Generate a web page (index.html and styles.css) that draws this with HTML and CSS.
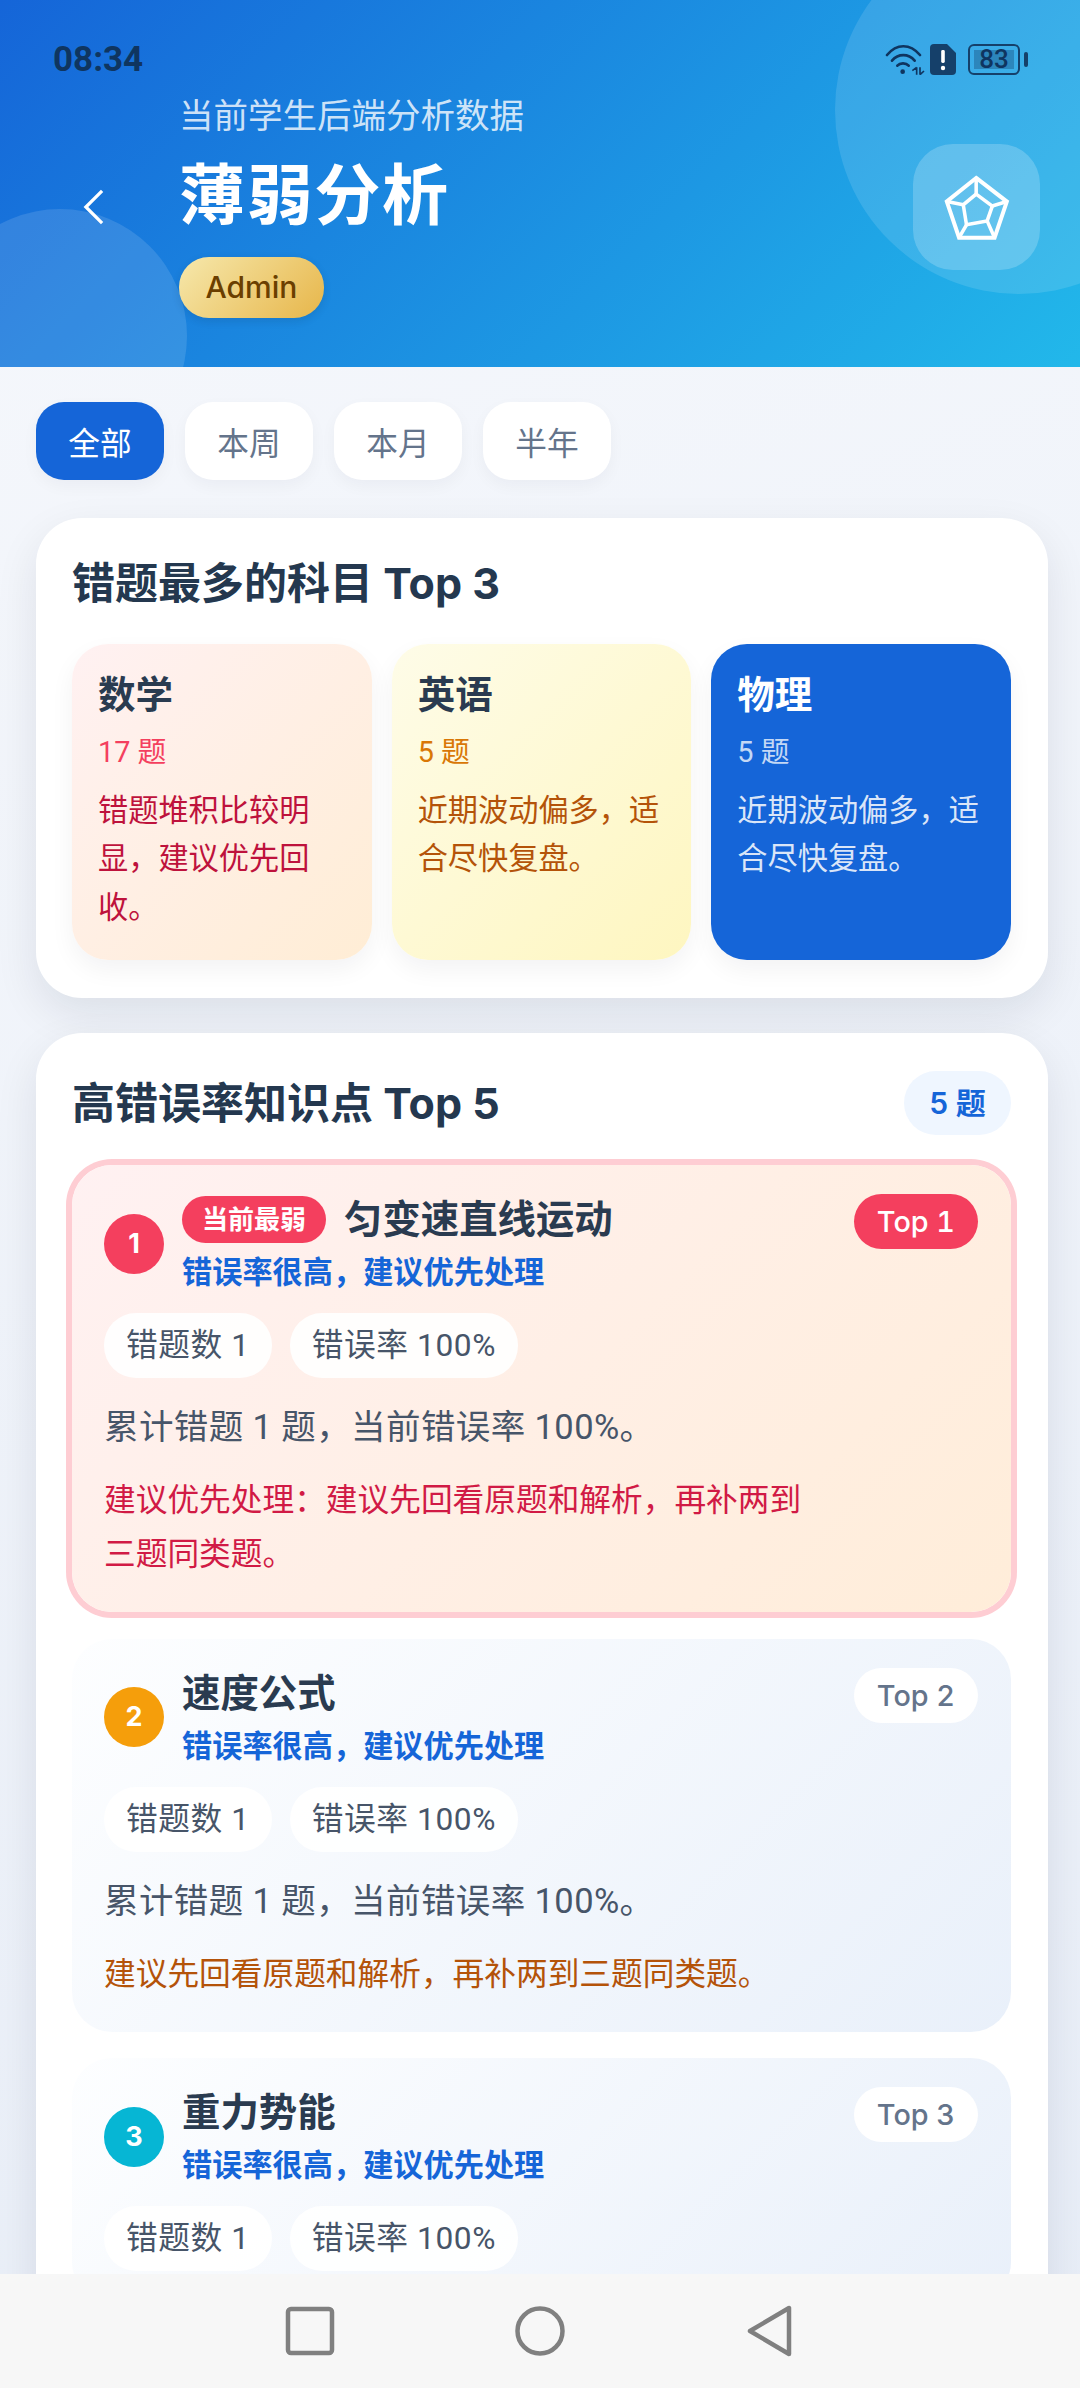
FILE: index.html
```html
<!DOCTYPE html>
<html lang="zh-CN">
<head>
    <meta charset="UTF-8">
    <meta name="viewport" content="width=device-width, initial-scale=1.0">
    <title>薄弱分析</title>
    <link rel="stylesheet" href="styles.css">
</head>
<body>
    <div class="app">
        <header class="hero">
            <div class="hero-blob hero-blob-right"></div>
            <div class="hero-blob hero-blob-left"></div>

            <div class="status-bar">
                <span class="status-time">08:34</span>
                <div class="status-icons">
                    <svg class="icon-wifi" viewBox="75 72 120 93" fill="none" stroke="currentColor" stroke-width="8" stroke-linecap="round">
                        <path d="M81 105C110 70 150 70 180 105"/>
                        <path d="M96 122C115 100 145 100 164 122"/>
                        <path d="M112 137C120 128 138 128 146 137"/>
                        <circle cx="128" cy="155" r="7" fill="currentColor" stroke="none"/>
                        <path d="M170 142V164M180 142V164M157 152L170 142M180 164L192 153" stroke-width="5" stroke-linecap="butt"/>
                    </svg>
                    <svg class="icon-sim" viewBox="0 0 26 31">
                        <path d="M4 0H17L26 9V27A4 4 0 0 1 22 31H4A4 4 0 0 1 0 27V4A4 4 0 0 1 4 0Z" fill="currentColor"/>
                        <rect x="11.2" y="6" width="3.6" height="13" rx="1.4" fill="#fff"/>
                        <circle cx="13" cy="24" r="2.2" fill="#fff"/>
                    </svg>
                    <div class="battery"><span class="battery-level">83</span></div>
                </div>
            </div>

            <div class="hero-row">
                <svg class="back-icon" viewBox="0 0 22 36" fill="none" stroke="#fff" stroke-width="3.4">
                    <path d="M20 1L3 18L20 35"/>
                </svg>
                <div class="hero-text">
                    <div class="hero-sub">当前学生后端分析数据</div>
                    <h1 class="hero-title">薄弱分析</h1>
                    <span class="role-pill">Admin</span>
                </div>
                <div class="hero-tile">
                    <svg class="radar-icon" viewBox="149 116.5 220 220" fill="none" stroke="#fff" stroke-width="12.5" stroke-linejoin="miter">
                        <path d="M258 135L353 208L315 320H205L167 208Z"/>
                        <path d="M258 185L308 222L292 268L228 280L218 218Z" stroke-width="11"/>
                        <path d="M258 135V185M353 208L308 222M315 320L292 268M205 320L228 280M167 208L218 218" stroke-width="11"/>
                    </svg>
                </div>
            </div>
        </header>

        <main class="content">
            <div class="filters">
                <button class="chip chip-active">全部</button>
                <button class="chip">本周</button>
                <button class="chip">本月</button>
                <button class="chip">半年</button>
            </div>

            <section class="card card-subjects">
                <h2 class="card-title">错题最多的科目 Top 3</h2>
                <div class="subjects">
                    <div class="subject subject-red">
                        <div class="subject-name">数学</div>
                        <div class="subject-count">17 题</div>
                        <div class="subject-desc">错题堆积比较明显，建议优先回收。</div>
                    </div>
                    <div class="subject subject-yellow">
                        <div class="subject-name">英语</div>
                        <div class="subject-count">5 题</div>
                        <div class="subject-desc">近期波动偏多，适合尽快复盘。</div>
                    </div>
                    <div class="subject subject-blue">
                        <div class="subject-name">物理</div>
                        <div class="subject-count">5 题</div>
                        <div class="subject-desc">近期波动偏多，适合尽快复盘。</div>
                    </div>
                </div>
            </section>

            <section class="card card-points">
                <div class="card-head">
                    <h2 class="card-title">高错误率知识点 Top 5</h2>
                    <span class="count-badge">5 题</span>
                </div>

                <article class="point point-weakest">
                    <div class="point-main">
                        <div class="point-head">
                            <span class="rank rank-1">1</span>
                            <div class="point-heading">
                                <div class="point-name-row">
                                    <span class="weak-badge">当前最弱</span>
                                    <span class="point-name">匀变速直线运动</span>
                                </div>
                                <div class="point-hint">错误率很高，建议优先处理</div>
                            </div>
                        </div>
                        <div class="stats">
                            <span class="stat">错题数 1</span>
                            <span class="stat">错误率 100%</span>
                        </div>
                        <p class="point-body">累计错题 1 题，当前错误率 100%。</p>
                        <p class="point-advice">建议优先处理：建议先回看原题和解析，再补两到三题同类题。</p>
                    </div>
                    <span class="top-tag">Top 1</span>
                </article>

                <article class="point">
                    <div class="point-main">
                        <div class="point-head">
                            <span class="rank rank-2">2</span>
                            <div class="point-heading">
                                <div class="point-name-row">
                                    <span class="point-name">速度公式</span>
                                </div>
                                <div class="point-hint">错误率很高，建议优先处理</div>
                            </div>
                        </div>
                        <div class="stats">
                            <span class="stat">错题数 1</span>
                            <span class="stat">错误率 100%</span>
                        </div>
                        <p class="point-body">累计错题 1 题，当前错误率 100%。</p>
                        <p class="point-advice">建议先回看原题和解析，再补两到三题同类题。</p>
                    </div>
                    <span class="top-tag">Top 2</span>
                </article>

                <article class="point">
                    <div class="point-main">
                        <div class="point-head">
                            <span class="rank rank-3">3</span>
                            <div class="point-heading">
                                <div class="point-name-row">
                                    <span class="point-name">重力势能</span>
                                </div>
                                <div class="point-hint">错误率很高，建议优先处理</div>
                            </div>
                        </div>
                        <div class="stats">
                            <span class="stat">错题数 1</span>
                            <span class="stat">错误率 100%</span>
                        </div>
                    </div>
                    <span class="top-tag">Top 3</span>
                </article>
            </section>
        </main>

        <nav class="system-nav">
            <svg class="nav-icon" viewBox="0 0 50 54" fill="none" stroke="#808080" stroke-width="4.5" stroke-linejoin="round">
                <rect x="3" y="5" width="44" height="44" rx="3"/>
            </svg>
            <svg class="nav-icon" viewBox="0 0 50 54" fill="none" stroke="#808080" stroke-width="4.5">
                <circle cx="25" cy="27" r="22.5"/>
            </svg>
            <svg class="nav-icon" viewBox="0 0 50 54" fill="none" stroke="#808080" stroke-width="4.5" stroke-linejoin="round">
                <path d="M44 4V50L5 27Z"/>
            </svg>
        </nav>
    </div>
</body>
</html>
```

FILE: styles.css
```css
* {
    box-sizing: border-box;
}

html, body {
    margin: 0;
    height: 100%;
}

body {
    font-family: Inter, "Noto Sans CJK SC", sans-serif;
    color: #1e293b;
}

h1, h2, p {
    margin: 0;
}

.app {
    height: 100vh;
    display: flex;
    flex-direction: column;
    overflow: hidden;
    background: linear-gradient(160deg, #f6f8fc, #e7edf7);
}

/* top banner */
.hero {
    position: relative;
    flex: none;
    height: 367px;
    overflow: hidden;
    background: linear-gradient(135deg, #1565d8, #22b8ea);
}

.hero-blob {
    position: absolute;
    border-radius: 50%;
    background: rgba(255, 255, 255, 0.12);
}

.hero-blob-right {
    left: 835px;
    top: -74px;
    width: 368px;
    height: 368px;
}

.hero-blob-left {
    left: -67px;
    top: 209px;
    width: 254px;
    height: 254px;
}

.status-bar {
    position: relative;
    height: 96px;
    padding: 22px 52px 0 53px;
    display: flex;
    align-items: center;
    justify-content: space-between;
    color: #0f3560;
}

.status-time {
    font-family: Roboto, sans-serif;
    font-size: 35px;
    font-weight: 700;
}

.status-icons {
    display: flex;
    align-items: center;
}

.icon-wifi {
    width: 40px;
    height: 31px;
    margin-right: 5px;
}

.icon-sim {
    width: 26px;
    height: 31px;
    margin-right: 12px;
    color: #15406a;
}

.battery {
    position: relative;
    width: 52px;
    height: 31px;
    margin-right: 8px;
    padding: 4px;
    border: 2px solid #15406a;
    border-radius: 6px;
}

.battery::after {
    content: '';
    position: absolute;
    right: -10px;
    top: 6px;
    width: 4px;
    height: 15px;
    border-radius: 2px;
    background: #15406a;
}

.battery-level {
    display: block;
    height: 100%;
    background: rgba(21, 64, 106, 0.35);
    font-family: Roboto, sans-serif;
    font-size: 26px;
    font-weight: 500;
    line-height: 19px;
    text-align: center;
}

.hero-row {
    position: relative;
    display: flex;
    align-items: center;
    padding: 0 40px 0 83px;
}

.back-icon {
    flex: none;
    width: 21px;
    height: 36px;
    margin-right: 75px;
}

.hero-text {
    flex: 1;
}

.hero-sub {
    font-size: 34.5px;
    line-height: 40px;
    color: rgba(255, 255, 255, 0.8);
}

.hero-title {
    margin-top: 16px;
    font-size: 66.2px;
    line-height: 86px;
    font-weight: 700;
    letter-spacing: 1.44px;
    color: #fff;
}

.role-pill {
    display: inline-block;
    margin-top: 19px;
    height: 61px;
    padding: 0 26.5px;
    border-radius: 30px;
    background: linear-gradient(135deg, #f6e8ac, #e7b64a);
    box-shadow: 0 3px 8px rgba(15, 23, 42, 0.12);
    font-size: 30px;
    font-weight: 500;
    line-height: 61px;
    color: #6b3f00;
}

.hero-tile {
    flex: none;
    width: 127px;
    height: 126px;
    border-radius: 40px;
    background: rgba(255, 255, 255, 0.2);
    display: flex;
    align-items: center;
    justify-content: center;
}

.radar-icon {
    width: 71px;
    height: 71px;
}

/* scrolling body */
.content {
    flex: 1;
    min-height: 0;
    overflow: hidden;
    padding: 35px 32px 0 36px;
}

.filters {
    display: flex;
    gap: 21px;
    margin-bottom: 38px;
}

.chip {
    width: 128px;
    height: 78px;
    padding: 0;
    border: none;
    border-radius: 28px;
    background: #fff;
    box-shadow: 0 6px 16px rgba(15, 23, 42, 0.04);
    font-family: inherit;
    font-size: 31.7px;
    color: #64748b;
}

.chip-active {
    background: #1565d8;
    color: #fff;
}

.card {
    background: #fff;
    border-radius: 46px;
    box-shadow: 0 16px 44px rgba(15, 23, 42, 0.09);
}

.card-subjects {
    padding: 35px 37px 38px 36px;
    margin-bottom: 35px;
}

.card-points {
    padding: 38px 37px 36px 36px;
}

.card-title {
    font-size: 43px;
    line-height: 60px;
    font-weight: 700;
    color: #24384f;
}

.card-subjects .card-title {
    margin-bottom: 31px;
}

.card-head {
    display: flex;
    align-items: center;
    justify-content: space-between;
    margin-bottom: 30px;
}

.count-badge {
    width: 107px;
    height: 64px;
    border-radius: 32px;
    background: #eff6ff;
    font-size: 30px;
    font-weight: 600;
    line-height: 64px;
    text-align: center;
    color: #1565d8;
}

/* three subject tiles */
.subjects {
    display: grid;
    grid-template-columns: repeat(3, 1fr);
    gap: 20px;
}

.subject {
    height: 316px;
    padding: 26px 26px 0;
    border-radius: 36px;
    box-shadow: 0 10px 24px rgba(15, 23, 42, 0.05);
}

.subject-name {
    font-size: 37.5px;
    line-height: 50px;
    font-weight: 700;
    color: #2a3b50;
}

.subject-count {
    margin-top: 9px;
    font-family: Roboto, "Noto Sans CJK SC", sans-serif;
    font-size: 28.8px;
    line-height: 46px;
}

.subject-desc {
    margin-top: 11px;
    font-size: 30.2px;
    line-height: 48.4px;
}

.subject-red {
    background: linear-gradient(135deg, #fff1f2, #ffedd5);
}

.subject-red .subject-count {
    color: #f43f5e;
}

.subject-red .subject-desc {
    color: #be123c;
}

.subject-yellow {
    background: linear-gradient(135deg, #fefce8, #fef6c0);
}

.subject-yellow .subject-count {
    color: #d97706;
}

.subject-yellow .subject-desc {
    color: #b45309;
}

.subject-blue {
    background: #1565d8;
}

.subject-blue .subject-name {
    color: #fff;
}

.subject-blue .subject-count {
    color: rgba(255, 255, 255, 0.75);
}

.subject-blue .subject-desc {
    color: rgba(255, 255, 255, 0.85);
}

/* knowledge point rows */
.point {
    display: flex;
    align-items: flex-start;
    gap: 29px;
    padding: 29px 33px 31px 32px;
    margin-bottom: 26.5px;
    border-radius: 40px;
    background: linear-gradient(135deg, #fdfeff, #e9f0fa);
}

.point-weakest {
    background: linear-gradient(135deg, #fff1f2, #ffedd9);
    box-shadow: 0 0 0 6px #fecdd3;
}

.point-main {
    flex: 1;
    min-width: 0;
}

.point-head {
    display: flex;
    align-items: center;
    gap: 18px;
}

.rank {
    flex: none;
    width: 60px;
    height: 60px;
    border-radius: 50%;
    font-size: 27px;
    font-weight: 700;
    line-height: 60px;
    text-align: center;
    color: #fff;
}

.rank-1 {
    background: #f43f5e;
}

.rank-2 {
    background: #f59e0b;
}

.rank-3 {
    background: #06b6d4;
}

.point-name-row {
    display: flex;
    align-items: center;
    gap: 18px;
    height: 50px;
}

.weak-badge {
    height: 47px;
    padding: 0 20px;
    border-radius: 24px;
    background: #f43f5e;
    font-size: 26px;
    font-weight: 700;
    line-height: 47px;
    color: #fff;
}

.point-name {
    font-size: 38.4px;
    font-weight: 700;
    line-height: 50px;
    color: #2a3b50;
}

.point-hint {
    margin-top: 7px;
    font-size: 30.2px;
    font-weight: 600;
    line-height: 42px;
    color: #1565d8;
}

.stats {
    display: flex;
    gap: 18px;
    margin-top: 20px;
}

.stat {
    height: 65px;
    padding: 0 22px;
    border-radius: 32px;
    background: rgba(255, 255, 255, 0.9);
    font-family: Roboto, "Noto Sans CJK SC", sans-serif;
    font-size: 31.7px;
    letter-spacing: 0.6px;
    line-height: 65px;
    color: #475569;
}

.point-body {
    margin-top: 22px;
    font-family: Roboto, "Noto Sans CJK SC", sans-serif;
    font-size: 34.5px;
    letter-spacing: 0.4px;
    line-height: 55px;
    color: #475569;
}

.point-advice {
    margin-top: 18px;
    font-size: 31.7px;
    line-height: 54px;
    color: #b45309;
}

.point-weakest .point-advice {
    color: #d11a45;
}

.top-tag {
    flex: none;
    height: 55px;
    padding: 0 23px;
    border-radius: 28px;
    background: #fff;
    font-size: 28.8px;
    font-weight: 500;
    font-variant-numeric: tabular-nums;
    line-height: 55px;
    color: #64748b;
}

.point-weakest .top-tag {
    background: #f43f5e;
    color: #fff;
}

/* android navigation bar */
.system-nav {
    flex: none;
    height: 114px;
    display: flex;
    align-items: center;
    justify-content: center;
    gap: 180px;
    background: #f7f7f7;
}

.nav-icon {
    width: 50px;
    height: 54px;
}
```
